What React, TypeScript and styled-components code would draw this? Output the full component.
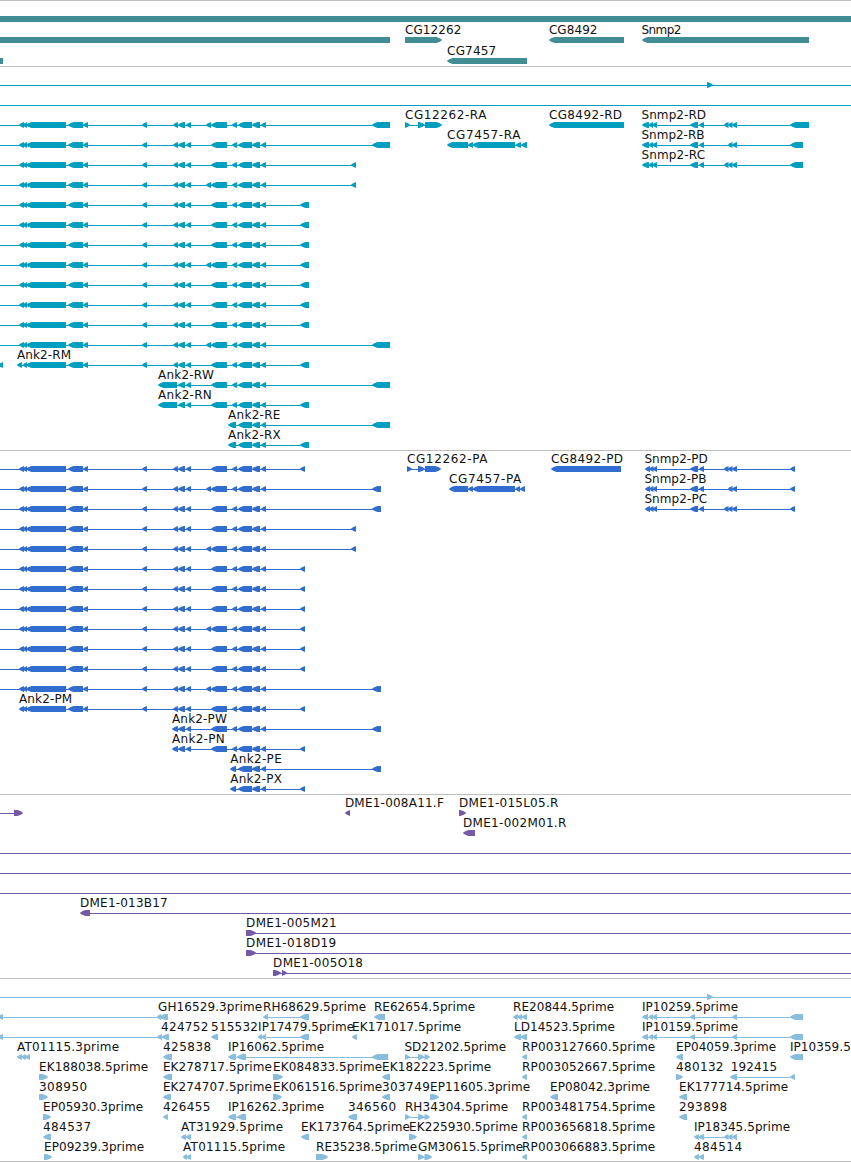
import React from 'react';
import styled, { createGlobalStyle } from 'styled-components';

const GlobalStyle = createGlobalStyle`
  html, body { margin: 0; padding: 0; background: #fff; }
  body { overflow: hidden; }
`;

const Browser = styled.main`
  display: flex;
  flex-direction: column;
  width: 851px;
  height: 1161px;
  overflow: hidden;
  border-bottom: 1px solid #bebebe;
  background: #fff;
`;

const TrackPanel = styled.section<{ $color: string; $bottom: number }>`
  display: flex;
  flex-direction: column;
  border-top: 1px solid #bebebe;
  padding: 1px 0 ${(p) => p.$bottom}px;
  color: ${(p) => p.$color};
`;

const Lane = styled.svg<{ $height: number }>`
  display: block;
  flex: none;
  width: 851px;
  height: ${(p) => p.$height}px;
  overflow: hidden;
`;

const Label = styled.text`
  fill: #111;
  font-family: 'DejaVu Sans', sans-serif;
  font-size: 12px;
`;

const Shape = styled.path`
  fill: currentColor;
`;

type Dir = 'l' | 'r' | 'b';
type Span = [number, number];
interface Feature {
  dir: Dir;
  exons: Span[];
  line?: Span;
  label?: [string, number, number];
}
type Row = Feature[];

const TOP = 14;
const MID = 17;

function exonPath([a, b]: Span, dir: Dir) {
  const h = Math.min(5.5, b - a);
  const k = h * 0.4;
  const bottom = TOP + 6;
  if (dir === 'b') return `M${a} ${TOP}H${b}V${bottom}H${a}Z`;
  if (dir === 'l') return `M${a - 0.3} ${MID}L${a + k} ${TOP + 1.2}L${a + h} ${TOP}H${b}V${bottom}H${a + h}L${a + k} ${bottom - 1.2}Z`;
  return `M${b + 0.3} ${MID}L${b - k} ${TOP + 1.2}L${b - h} ${TOP}H${a}V${bottom}H${b - h}L${b - k} ${bottom - 1.2}Z`;
}

function FeatureGlyph({ dir, exons, line, label }: Feature) {
  return (
    <g>
      {line && <rect x={line[0]} y={MID} width={line[1] - line[0]} height={1} fill="currentColor" />}
      {exons.map((e, i) => (
        <Shape key={i} d={exonPath(e, dir)} />
      ))}
      {label && (
        <Label x={label[1] - 0.8} y={11} textLength={label[2] - label[1] + 1.6} lengthAdjust="spacing">
          {label[0]}
        </Label>
      )}
    </g>
  );
}

function Track({ color, rows, rowHeight = 20, bottom = 2 }: { color: string; rows: Row[]; rowHeight?: number; bottom?: number }) {
  return (
    <TrackPanel $color={color} $bottom={bottom}>
      {rows.map((row, i) => (
        <Lane key={i} $height={rowHeight}>
          {row.map((f, j) => (
            <FeatureGlyph key={j} {...f} />
          ))}
        </Lane>
      ))}
    </TrackPanel>
  );
}

/* A feature whose connecting line spans its exons. */
const f = (dir: Dir, exons: Span[], name?: string, x1 = 0, x2 = 0): Feature => ({
  dir,
  exons,
  line: exons.length > 1 ? [exons[0][0] + 1, exons[exons.length - 1][1] - 1] : undefined,
  label: name ? [name, x1, x2] : undefined,
});
const through: Feature = { dir: 'l', exons: [], line: [0, 851] };

const HEAD: Span[] = [[19, 24], [23, 27], [26, 66], [68, 83], [83, 88], [142, 147]];
const MIDDLE: Span[] = [[178, 185], [186, 191]];
const TAIL: Span[] = [[238, 252], [252, 260], [261, 266]];

const ank = (last: Span, extra = false): Feature => ({
  dir: 'l',
  exons: [...HEAD, [173, 178], ...MIDDLE, ...(extra ? [[206, 211] as Span] : []), [211, 227], [232, 237], ...TAIL, last],
  line: [0, last[1]],
});
const ankM = (start: number, last: Span, name: string, x1: number, x2: number): Feature => ({
  dir: 'l',
  exons: [[start, start + 5], ...HEAD.slice(1), [173, 178], ...MIDDLE, [211, 227], [232, 237], ...TAIL, last],
  line: [start + 1, last[1]],
  label: [name, x1, x2],
});
const ankMid = (first: Span, last: Span, name: string, x1: number, x2: number) =>
  f('l', [first, ...MIDDLE, [211, 227], [232, 237], ...TAIL, last], name, x1, x2);
const ankEnd = (first: Span, last: Span, name: string, x1: number, x2: number) =>
  f('l', [first, ...TAIL, last], name, x1, x2);

const snmp = (first: Span[], full: boolean, last: Span, name: string, x1: number, x2: number) =>
  f('l', [...first, [690, 698], [699, 704], ...(full ? [[724, 728.5] as Span] : []), [728, 732.5], [732, 737], last], name, x1, x2);

const LONG: Span = [372, 390];
const SHORT: Span = [300, 309];
const SMALL: Span = [351, 356];
const R1: Span[] = [[642, 649], [649, 653], [652.5, 657]];

const genes: Row[] = [
  [f('b', [[0, 851]])],
  [
    f('b', [[0, 390]]),
    f('r', [[405, 442]], 'CG12262', 405.7, 460.7),
    f('l', [[549, 624]], 'CG8492', 549.7, 596.7),
    f('l', [[642, 809]], 'Snmp2', 642.3, 680.5),
  ],
  [f('b', [[0, 3]]), f('l', [[447, 527]], 'CG7457', 447.9, 495.3)],
];

const transcripts: Row[] = [
  [through, f('r', [[707, 713]])],
  [through],
  [
    ank(LONG, true),
    f('r', [[405, 410], [418, 425], [425, 442]], 'CG12262-RA', 405.7, 485.7),
    f('l', [[549, 624]], 'CG8492-RD', 549.7, 621.3),
    snmp(R1, true, [790, 809], 'Snmp2-RD', 642.3, 705.3),
  ],
  [
    ank(LONG),
    f('l', [[447, 468], [468, 473], [472.5, 515], [515.5, 521], [521, 527]], 'CG7457-RA', 447.9, 519.6),
    snmp(R1, false, [790, 803], 'Snmp2-RB', 642.3, 703.7),
  ],
  [ank(SMALL), snmp(R1, true, [790, 803], 'Snmp2-RC', 642.3, 704.3)],
  [ank(SMALL, true)],
  [ank(SHORT)],
  [ank(SHORT)],
  [ank(SHORT)],
  [ank(SHORT, true)],
  [ank(SHORT)],
  [ank(SHORT)],
  [ank(SHORT)],
  [ank(LONG, true)],
  [f('l', [[-2, 3]]), ankM(17, SHORT, 'Ank2-RM', 17.8, 70.3)],
  [ankMid([158, 177], LONG, 'Ank2-RW', 158.8, 213)],
  [ankMid([158, 177], SHORT, 'Ank2-RN', 158.8, 211)],
  [ankEnd([228, 236], LONG, 'Ank2-RE', 228.8, 279.6)],
  [ankEnd([228, 236], SHORT, 'Ank2-RX', 228.8, 280)],
];

const P_LONG: Span = [372, 381];
const P_SHORT: Span = [300, 305];
const P1: Span[] = [[645, 650], [649.5, 653.5], [653, 657]];

const proteins: Row[] = [
  [
    ank(P_SHORT),
    f('r', [[407, 412], [418, 425], [425, 441]], 'CG12262-PA', 407.7, 486.7),
    f('l', [[551, 621]], 'CG8492-PD', 551.7, 622.3),
    snmp(P1, true, [790, 795], 'Snmp2-PD', 645.2, 707),
  ],
  [
    ank(P_LONG, true),
    f('l', [[449, 468], [468, 473], [472.5, 515], [515.5, 520], [520, 525]], 'CG7457-PA', 449.9, 520.5),
    snmp(P1, false, [790, 795], 'Snmp2-PB', 645.2, 705.7),
  ],
  [ank(P_LONG), snmp(P1, true, [790, 795], 'Snmp2-PC', 645.2, 706.3)],
  [ank(SMALL)],
  [ank(SMALL, true)],
  [ank(P_SHORT)],
  [ank(P_SHORT)],
  [ank(P_SHORT)],
  [ank(P_SHORT, true)],
  [ank(P_SHORT)],
  [ank(P_SHORT)],
  [ank(P_LONG, true)],
  [ankM(19, P_SHORT, 'Ank2-PM', 19.8, 71.4)],
  [ankMid([172, 178], P_LONG, 'Ank2-PW', 172.8, 226)],
  [ankMid([172, 178], P_SHORT, 'Ank2-PN', 172.8, 224)],
  [ankEnd([230, 236], P_LONG, 'Ank2-PE', 231, 281)],
  [ankEnd([230, 236], P_SHORT, 'Ank2-PX', 231, 281.3)],
];

const clone = (dir: Dir, exons: Span[], name: string, x1: number, x2: number): Feature => ({
  dir,
  exons,
  line: [exons[0][0] + 1, 851],
  label: [name, x1, x2],
});

const clones: Row[] = [
  [
    { dir: 'r', exons: [[14, 23]], line: [0, 15] },
    f('l', [[345, 350]], 'DME1-008A11.F', 345.7, 443),
    f('r', [[459, 466]], 'DME1-015L05.R', 459.9, 557.5),
  ],
  [f('l', [[463, 475]], 'DME1-002M01.R', 463.9, 565.5)],
  [through],
  [through],
  [through],
  [clone('l', [[80, 90]], 'DME1-013B17', 80.9, 166.9)],
  [clone('r', [[246, 256]], 'DME1-005M21', 246.9, 335.9)],
  [clone('r', [[246, 256]], 'DME1-018D19', 246.9, 335.3)],
  [clone('r', [[273, 281], [282, 287]], 'DME1-005O18', 273.9, 362.2)],
];

const rp = (id: string) => f('l', [[522, 527]], `RP${id}.5prime`, 522.9, 654.3);
const IP: Span[] = [[642, 648], [649, 653], [652.5, 657], [690, 695], [732, 737], [790, 803]];
const SD: Span[] = [[405, 410], [418, 424.5], [424.5, 430]];

const ests: Row[] = [
  [through, f('r', [[707, 713]])],
  [
    f('l', [[-2, 3], [157, 161], [159.5, 168]], 'GH16529.3prime', 158.9, 261.3),
    f('l', [[263, 268], [300, 309]], 'RH68629.5prime', 263.9, 365.3),
    f('l', [[374, 385]], 'RE62654.5prime', 374.7, 474.3),
    f('l', [[513, 518], [517.5, 522], [521.5, 527]], 'RE20844.5prime', 513.9, 613.3),
    f('l', IP, 'IP10259.5prime', 642.7, 737.3),
  ],
  [
    f('l', [[-2, 3], [157, 162], [161.5, 169]], '424752', 161.9, 207.5),
    f('l', [[211, 218]], '515532', 211.9, 257.1),
    f('l', [[258, 262], [261.5, 266], [300, 309]], 'IP17479.5prime', 258.9, 353.3),
    f('l', [[352, 357]], 'EK171017.5prime', 352.9, 460.3),
    f('l', [[514, 521], [520.5, 527]], 'LD14523.5prime', 514.9, 614),
    f('l', IP, 'IP10159.5prime', 642.7, 737.3),
  ],
  [
    f('l', [[17, 22], [21.5, 26], [25.5, 30]], 'AT01115.3prime', 17.7, 118.3),
    f('l', [[163, 172]], '425838', 163.7, 210.4),
    f('l', [[228, 236], [237, 246], [372, 388]], 'IP16062.5prime', 228.7, 323.3),
    f('r', SD, 'SD21202.5prime', 405.2, 505.3),
    rp('003127660'),
    f('l', [[676, 683]], 'EP04059.3prime', 676.9, 775.3),
    f('l', [[790, 803]], 'IP10359.5prime', 790.7, 885.3),
  ],
  [
    f('r', [[39, 48]], 'EK188038.5prime', 39.9, 147.3),
    f('l', [[163, 172]], 'EK278717.5prime', 163.7, 271.2),
    f('r', [[273, 283]], 'EK084833.5prime', 273.9, 381.3),
    f('l', [[382, 390]], 'EK182223.5prime', 382.9, 490.3),
    rp('003052667'),
    f('r', [[676, 683]], '480132', 676.9, 722.7),
    f('l', [[730, 737], [790, 795]], '192415', 731.5, 776.3),
  ],
  [
    f('r', [[39, 48]], '308950', 39.7, 86.4),
    f('l', [[163, 171]], 'EK274707.5prime', 163.7, 271.2),
    f('r', [[273, 282]], 'EK061516.5prime', 273.9, 381.3),
    f('l', [[382, 390]], '303749', 382.7, 429.1),
    f('r', [[430, 439]], 'EP11605.3prime', 430.9, 529.3),
    f('l', [[550, 558]], 'EP08042.3prime', 550.9, 649.2),
    f('l', [[679, 687]], 'EK177714.5prime', 679.9, 787.3),
  ],
  [
    f('r', [[43, 51]], 'EP05930.3prime', 43.9, 142.3),
    f('l', [[163, 168]], '426455', 163.7, 209.5),
    f('l', [[228, 236], [237, 246]], 'IP16262.3prime', 228.7, 323.3),
    f('l', [[348, 357]], '346560', 348.7, 395.3),
    f('r', SD, 'RH34304.5prime', 405.7, 507.3),
    rp('003481754'),
    f('l', [[679, 687]], '293898', 679.7, 726.3),
  ],
  [
    f('l', [[43, 51]], '484537', 43.7, 90.3),
    f('l', [[181, 186], [185.5, 191]], 'AT31929.5prime', 181.7, 282.3),
    f('l', [[301, 309]], 'EK173764.5prime', 301.9, 409),
    f('r', [[409, 417]], 'EK225930.5prime', 409.9, 517),
    rp('003656818'),
    f('l', [[694, 699], [698.5, 704], [724, 728.5], [728, 732.5], [732, 737]], 'IP18345.5prime', 694.7, 789.3),
  ],
  [
    f('r', [[44, 52]], 'EP09239.3prime', 44.9, 143.3),
    f('l', [[183, 187], [186.5, 191]], 'AT01115.5prime', 183.9, 284.3),
    f('r', [[316, 328]], 'RE35238.5prime', 316.9, 416.3),
    f('r', [[418, 424.5], [424.5, 432]], 'GM30615.5prime', 418.9, 522.3),
    rp('003066883'),
    f('l', [[694, 699], [698.5, 704]], '484514', 694.7, 741.3),
  ],
];

export default function App() {
  return (
    <>
      <GlobalStyle />
      <Browser>
        <Track color="#408e93" rows={genes} rowHeight={21} bottom={1} />
        <Track color="#009fc0" rows={transcripts} />
        <Track color="#316dce" rows={proteins} />
        <Track color="#7459a6" rows={clones} />
        <Track color="#89bddd" rows={ests} bottom={1} />
      </Browser>
    </>
  );
}
